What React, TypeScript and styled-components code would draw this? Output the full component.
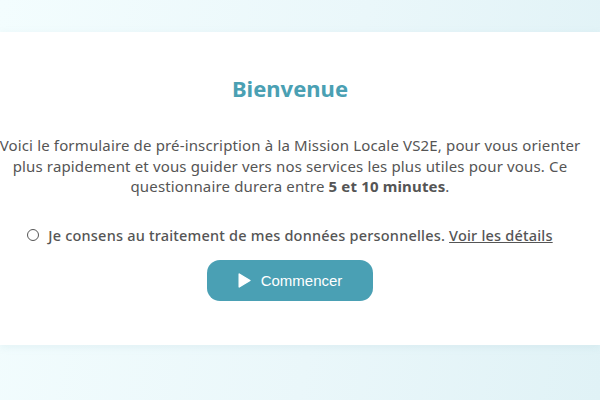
import React from 'react'
import styled, { createGlobalStyle } from 'styled-components'

const GlobalStyle = createGlobalStyle`
  html, body {
    margin: 0;
    padding: 0;
    width: 600px;
    height: 400px;
    overflow: hidden;
  }
  body {
    font-family: 'Noto Sans', sans-serif;
    background: linear-gradient(100deg, #f3fdfe 0%, #eaf7fa 55%, #e0f2f6 100%);
  }
`

const PlayIcon = () => (
  <svg width='13' height='15' viewBox='0 0 13 15' aria-hidden>
    <path d='M1.2 1 L12 7.5 L1.2 14 Z' fill='#fff' strokeLinejoin='round' stroke='#fff' strokeWidth='1.4' />
  </svg>
)

const App = () => {
  return (
    <>
      <GlobalStyle />
      <Page>
        <Card>
          <Title>Bienvenue</Title>
          <Intro>
            Voici le formulaire de pré-inscription à la Mission Locale VS2E, pour vous orienter plus
            rapidement et vous guider vers nos services les plus utiles pour vous. Ce questionnaire
            durera entre <strong>5 et 10 minutes</strong>.
          </Intro>
          <Consent>
            <Radio />
            <span>
              Je consens au traitement de mes données personnelles. <DetailsLink>Voir les détails</DetailsLink>
            </span>
          </Consent>
          <StartButton type='button'>
            <PlayIcon />
            Commencer
          </StartButton>
        </Card>
      </Page>
    </>
  )
}

const Page = styled.div`
  padding-top: 32px;
  height: 400px;
  box-sizing: border-box;
`

const Card = styled.main`
  background: #fff;
  height: 313px;
  box-sizing: border-box;
  padding: 41px 20px 0 0;
  display: flex;
  flex-direction: column;
  align-items: center;
  box-shadow: 0 2px 8px rgba(120, 170, 180, 0.12);
`

const Title = styled.h1`
  margin: 0;
  font-size: 22px;
  font-weight: 700;
  line-height: 30px;
  color: #4aa0b3;
`

const Intro = styled.p`
  margin: 32px 0 0;
  width: 584px;
  flex-shrink: 0;
  font-size: 15px;
  letter-spacing: 0.15px;
  line-height: 20.5px;
  color: #555;
  text-align: center;

  strong {
    font-weight: 700;
  }
`

const Consent = styled.label`
  margin-top: 28px;
  display: flex;
  align-items: center;
  gap: 9px;
  font-size: 14.5px;
  letter-spacing: 0.2px;
  font-weight: 500;
  color: #555;
`

const Radio = styled.span`
  width: 10px;
  height: 10px;
  border: 1px solid #555;
  border-radius: 50%;
  flex-shrink: 0;
`

const DetailsLink = styled.a`
  color: #555;
  text-decoration: underline;
`

const StartButton = styled.button`
  margin-top: 15px;
  width: 166px;
  height: 41px;
  border: none;
  border-radius: 13px;
  background: #4aa0b4;
  color: #fff;
  font-family: 'Liberation Sans', Arial, sans-serif;
  font-size: 15px;
  display: flex;
  align-items: center;
  justify-content: center;
  gap: 10px;
`

export default App
